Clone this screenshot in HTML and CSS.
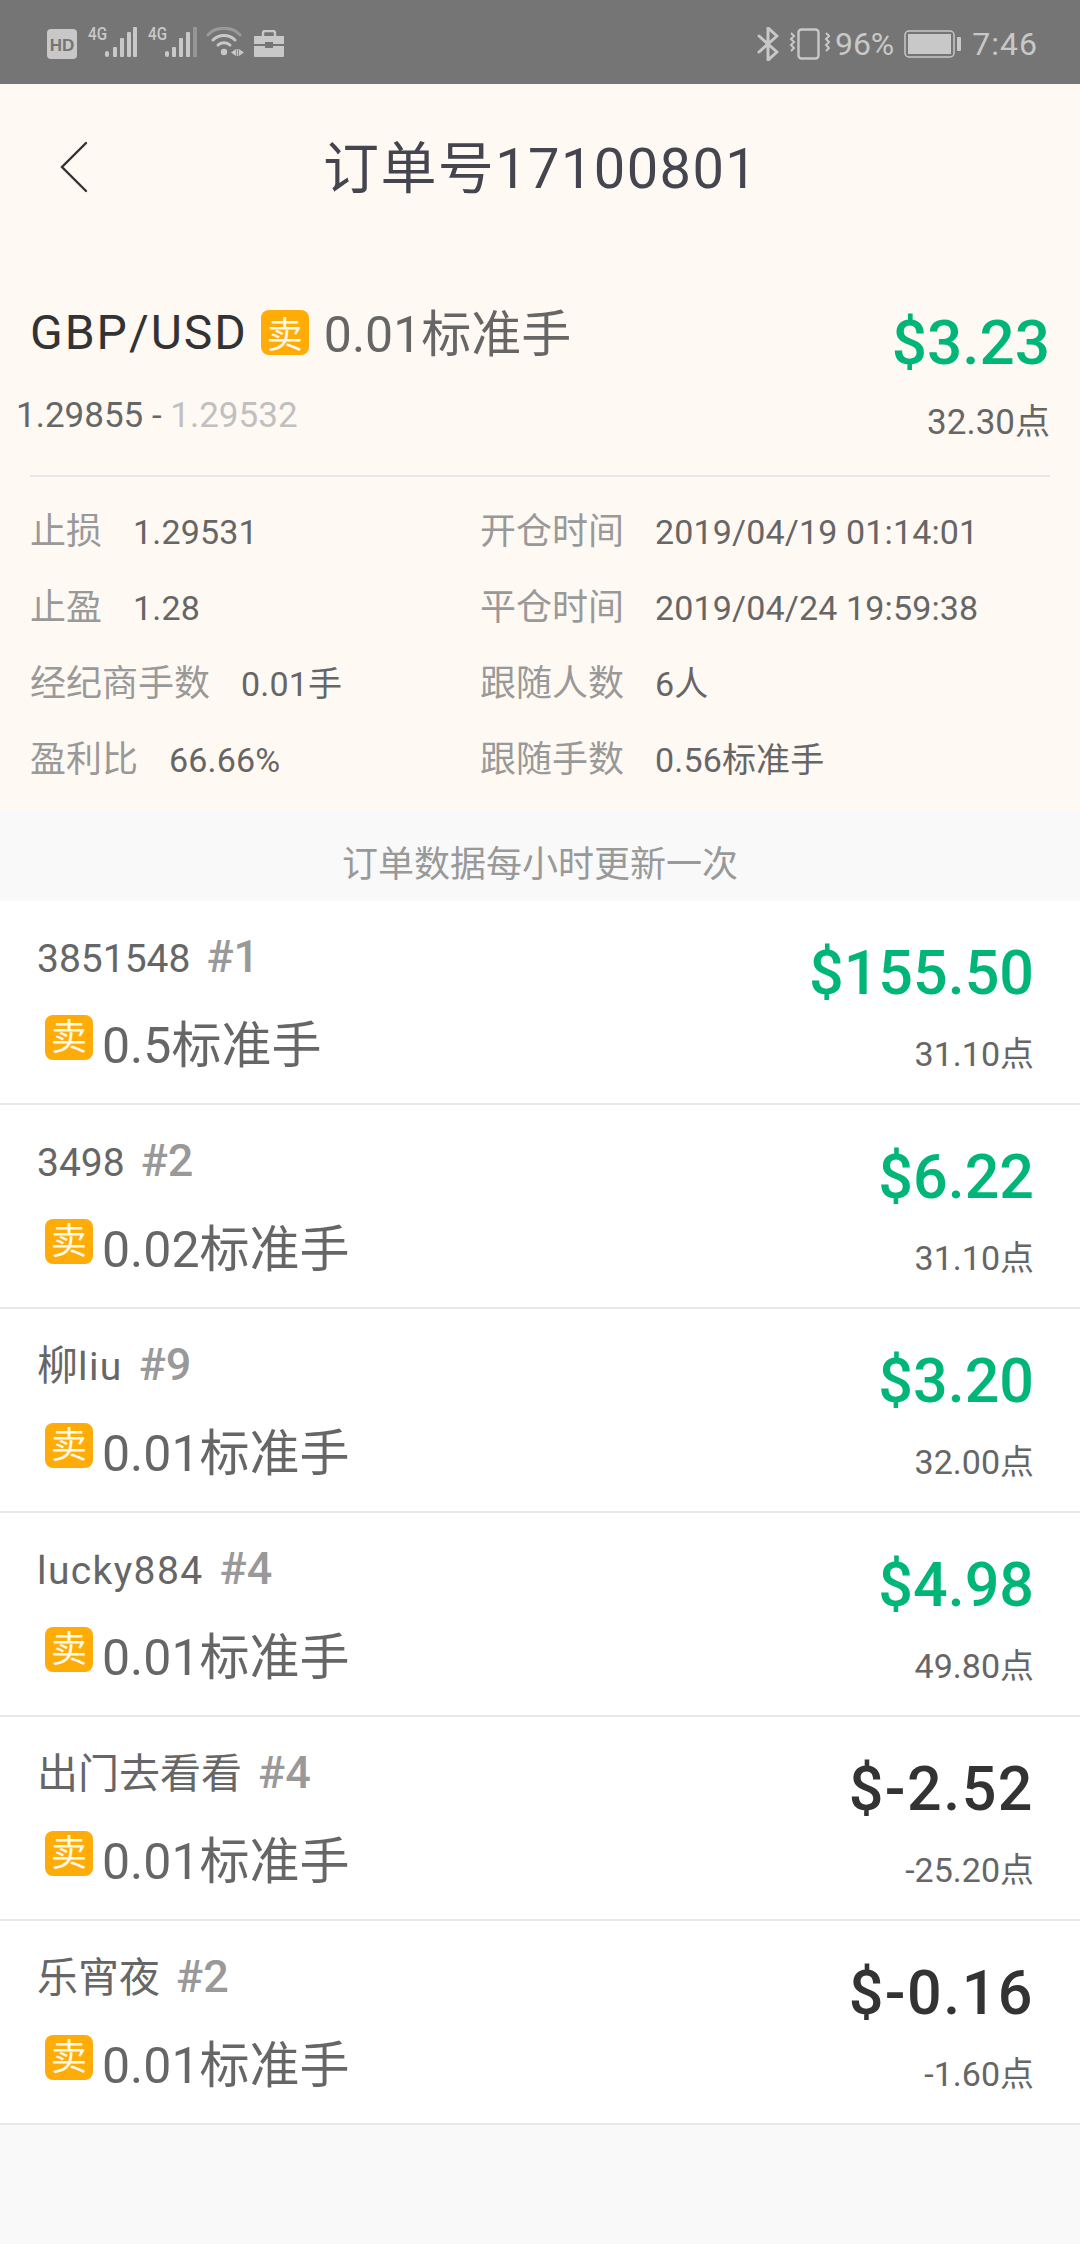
FILE: index.html
```html
<!DOCTYPE html>
<html lang="zh">
<head>
<meta charset="utf-8">
<title>订单号17100801</title>
<link rel="stylesheet" href="styles.css">
</head>
<body>
<div class="status">
  <div class="status-left">
    <svg class="ic-hd" viewBox="0 0 30 30" width="30" height="30"><rect x="0" y="0" width="30" height="30" rx="4" fill="#c8c8c8"/><text x="15" y="21.500" text-anchor="middle" class="hd-t">HD</text></svg>
    <div class="sig">
      <span class="g4">4G</span>
      <svg width="32" height="30" viewBox="0 0 32 30"><g fill="#c8c8c8"><rect x="0" y="24" width="4" height="6" rx="2"/><rect x="8" y="20" width="4" height="10" rx="1"/><rect x="15" y="11" width="4" height="19" rx="1"/><rect x="22" y="5" width="4" height="25" rx="1"/><rect x="28" y="0" width="4" height="30" rx="1"/></g></svg>
    </div>
    <div class="sig">
      <span class="g4">4G</span>
      <svg width="32" height="30" viewBox="0 0 32 30"><g fill="#c8c8c8"><rect x="0" y="24" width="4" height="6" rx="2"/><rect x="7" y="20" width="4" height="10" rx="1"/><rect x="14" y="11" width="4" height="19" rx="1"/><rect x="21" y="5" width="4" height="25" rx="1"/><rect x="28" y="0" width="4" height="30" fill="#969696"/></g></svg>
    </div>
    <svg class="ic-wifi" width="38" height="30" viewBox="0 0 38 30"><g fill="none" stroke-linecap="round" stroke-width="3"><path d="M2 8C10 -1 26 -1 34 8" stroke="#9a9a9a"/><path d="M7 13C13 7 23 7 29 13" stroke="#c8c8c8"/><path d="M12 18C15 15 21 15 24 18" stroke="#c8c8c8"/></g><circle cx="18" cy="25" r="3.200" fill="#c8c8c8"/><path d="M25 25.500l5-3.500v7zM33 22l5 3.500-5 3.500z" fill="#c8c8c8"/><path d="M31.500 22v7" stroke="#c8c8c8" stroke-width="1.500"/></svg>
    <svg class="ic-case" width="32" height="28" viewBox="0 0 32 28"><path d="M10 6V3a2 2 0 0 1 2-2h8a2 2 0 0 1 2 2v3" fill="none" stroke="#c8c8c8" stroke-width="2.400"/><path d="M1 6h30v8H20v-2h-8v2H1zM1 16h11v2h8v-2h11v10a1 1 0 0 1-1 1H2a1 1 0 0 1-1-1z" fill="#c8c8c8"/></svg>
  </div>
  <div class="status-right">
    <svg width="22" height="34" viewBox="0 0 22 34"><path d="M2 9l18 16-9 8V1l9 8L2 25" fill="none" stroke="#c8c8c8" stroke-width="3" stroke-linejoin="round" stroke-linecap="round"/></svg>
    <svg class="ic-vib" width="42" height="32" viewBox="0 0 42 32"><rect x="10.500" y="1.500" width="20" height="29" rx="3" fill="none" stroke="#c8c8c8" stroke-width="2.400"/><path d="M3 5l3 3-3 3 3 3-3 3 3 3-3 3M38 5l3 3-3 3 3 3-3 3 3 3-3 3" fill="none" stroke="#c8c8c8" stroke-width="2"/></svg>
    <span class="pct">96%</span>
    <svg class="ic-bat" width="58" height="28" viewBox="0 0 58 28"><rect x="1" y="1" width="49" height="26" rx="4" fill="none" stroke="#c8c8c8" stroke-width="1.500"/><rect x="4" y="4" width="43" height="20" fill="#c8c8c8"/><rect x="53" y="7" width="4" height="14" rx="1" fill="#c8c8c8"/></svg>
    <span class="time">7:46</span>
  </div>
</div>

<section class="order">
  <header class="nav">
    <svg class="back" width="28" height="52" viewBox="0 0 28 52"><path d="M26 2L2 26l24 24" fill="none" stroke="#333" stroke-width="2.400" stroke-linecap="round"/></svg>
    <h1 class="title">订单号17100801</h1>
  </header>
  <div class="summary">
    <div class="sum-left">
      <div class="pair-line"><span class="pair">GBP/USD</span><span class="tag tag-lg">卖</span><span class="lots">0.01标准手</span></div>
      <div class="prices">1.29855 - <span class="close">1.29532</span></div>
    </div>
    <div class="sum-right">
      <div class="profit">$3.23</div>
      <div class="pts">32.30点</div>
    </div>
  </div>
  <div class="details">
    <div class="d-cell"><span class="d-k">止损</span><span class="d-v">1.29531</span></div>
    <div class="d-cell"><span class="d-k">开仓时间</span><span class="d-v">2019/04/19 01:14:01</span></div>
    <div class="d-cell"><span class="d-k">止盈</span><span class="d-v">1.28</span></div>
    <div class="d-cell"><span class="d-k">平仓时间</span><span class="d-v">2019/04/24 19:59:38</span></div>
    <div class="d-cell"><span class="d-k">经纪商手数</span><span class="d-v">0.01手</span></div>
    <div class="d-cell"><span class="d-k">跟随人数</span><span class="d-v">6人</span></div>
    <div class="d-cell"><span class="d-k">盈利比</span><span class="d-v">66.66%</span></div>
    <div class="d-cell"><span class="d-k">跟随手数</span><span class="d-v">0.56标准手</span></div>
  </div>
</section>

<div class="note">订单数据每小时更新一次</div>

<ul class="list">
  <li class="row"><div><div class="who">3851548<span class="rank">#1</span></div><div class="size"><span class="tag">卖</span>0.5标准手</div></div><div class="r"><div class="amt up">$155.50</div><div class="p">31.10点</div></div></li>
  <li class="row"><div><div class="who">3498<span class="rank">#2</span></div><div class="size"><span class="tag">卖</span>0.02标准手</div></div><div class="r"><div class="amt up">$6.22</div><div class="p">31.10点</div></div></li>
  <li class="row"><div><div class="who"><span class="cn">柳</span><span class="wide">liu</span><span class="rank">#9</span></div><div class="size"><span class="tag">卖</span>0.01标准手</div></div><div class="r"><div class="amt up">$3.20</div><div class="p">32.00点</div></div></li>
  <li class="row"><div><div class="who"><span class="wide">lucky884</span><span class="rank">#4</span></div><div class="size"><span class="tag">卖</span>0.01标准手</div></div><div class="r"><div class="amt up">$4.98</div><div class="p">49.80点</div></div></li>
  <li class="row"><div><div class="who"><span class="cn">出门去看看</span><span class="rank">#4</span></div><div class="size"><span class="tag">卖</span>0.01标准手</div></div><div class="r"><div class="amt neg">$-2.52</div><div class="p">-25.20点</div></div></li>
  <li class="row"><div><div class="who"><span class="cn">乐宵夜</span><span class="rank">#2</span></div><div class="size"><span class="tag">卖</span>0.01标准手</div></div><div class="r"><div class="amt neg">$-0.16</div><div class="p">-1.60点</div></div></li>
</ul>
</body>
</html>
```
FILE: styles.css
```css
* { box-sizing: border-box; }
html, body { margin: 0; padding: 0; }
body {
  width: 1080px;
  height: 2244px;
  overflow: hidden;
  background: #f9f9f9;
  font-family: Roboto, "Noto Sans CJK SC", sans-serif;
  color: #333;
}

.status {
  height: 84px;
  background: #757575;
  display: flex;
  justify-content: space-between;
  align-items: flex-start;
  padding: 27px 42px 0 47px;
  color: #c8c8c8;
}
.status-left { display: flex; align-items: flex-start; }
.ic-hd { margin-top: 2px; }
.hd-t { font: 900 17px "Liberation Sans", sans-serif; fill: #757575; }
.sig { display: flex; position: relative; width: 49px; height: 30px; margin-left: 11px; justify-content: flex-end; }
.g4 { position: absolute; left: 0; top: -2px; font: 500 19px/18px Roboto, sans-serif; transform: scaleX(.8); transform-origin: left; }
.ic-wifi { margin-left: 9px; }
.ic-case { margin-left: 9px; margin-top: 3px; }
.status-right { display: flex; align-items: center; height: 34px; }
.status-right svg { flex: none; }
.ic-vib { margin-left: 9px; }
.pct { font-size: 32px; margin-left: 5px; }
.ic-bat { margin-left: 10px; }
.time { font-size: 32px; margin-left: 10px; letter-spacing: 1px; }

.order { background: #fff9f3; height: 727px; padding: 0 30px; }
.nav { height: 215px; position: relative; padding-top: 57px; }
.back { position: absolute; left: 30px; top: 57px; }
.title { margin: 0; padding-left: 293px; font-size: 56px; line-height: 56px; font-weight: 400; color: #454550; letter-spacing: 1.4px; }

.summary { display: flex; justify-content: space-between; height: 178px; border-bottom: 2px solid #e8e8e8; }
.pair-line { display: flex; align-items: center; height: 44px; margin-top: 11px; }
.pair { font-size: 48px; color: #333; letter-spacing: 2px; }
.lots { font-size: 50px; color: #666; margin: 0 0 4px 15px; }
.tag {
  display: inline-flex; align-items: center; justify-content: center;
  width: 48px; height: 45px; border-radius: 8px;
  background: #ffab08; color: #fff9e8; font-size: 36px; flex: none;
}
.tag-lg { margin-left: 13px; }
.prices { font-size: 35px; color: #666; margin: 41px 0 0 -14px; }
.close { color: #c0c0c0; }
.sum-right { text-align: right; padding-top: 9px; }
.profit { font-size: 62px; line-height: 70px; font-weight: 500; color: #00b578; }
.pts { font-size: 35px; color: #666; margin-top: 15px; }

.details { display: grid; grid-template-columns: 450px 1fr; grid-auto-rows: 76px; padding-top: 17px; }
.d-cell { display: flex; font-size: 36px; line-height: 76px; white-space: nowrap; }
.d-k { color: #999; margin-right: 31px; }
.d-v { color: #666; font-size: 34px; letter-spacing: .15px; }

.note { height: 90px; line-height: 109px; text-align: center; font-size: 36px; color: #999; background: #f9f9f9; }

.list { margin: 0; padding: 0; list-style: none; background: #fff; }
.row { height: 204px; display: flex; justify-content: space-between; border-bottom: 2px solid #e8e8e8; padding: 30px 46px 0 37px; }
.who { font-size: 39px; line-height: 52px; color: #666; }
.cn { font-size: 41px; }
.wide { letter-spacing: 1.4px; }
.rank { font-size: 45px; font-weight: 500; color: #999; margin-left: 16px; }
.size { display: flex; align-items: flex-start; font-size: 50px; line-height: 62px; color: #666; margin-top: 30px; }
.size .tag { margin: 0 9px 0 8px; }
.r { text-align: right; }
.amt { font-size: 61px; line-height: 72px; font-weight: 500; color: #333; margin-top: 6px; }
.amt.up { color: #00b578; }
.amt.neg { letter-spacing: 1.500px; }
.p { font-size: 34px; line-height: 40px; color: #666; margin-top: 25px; }
```
